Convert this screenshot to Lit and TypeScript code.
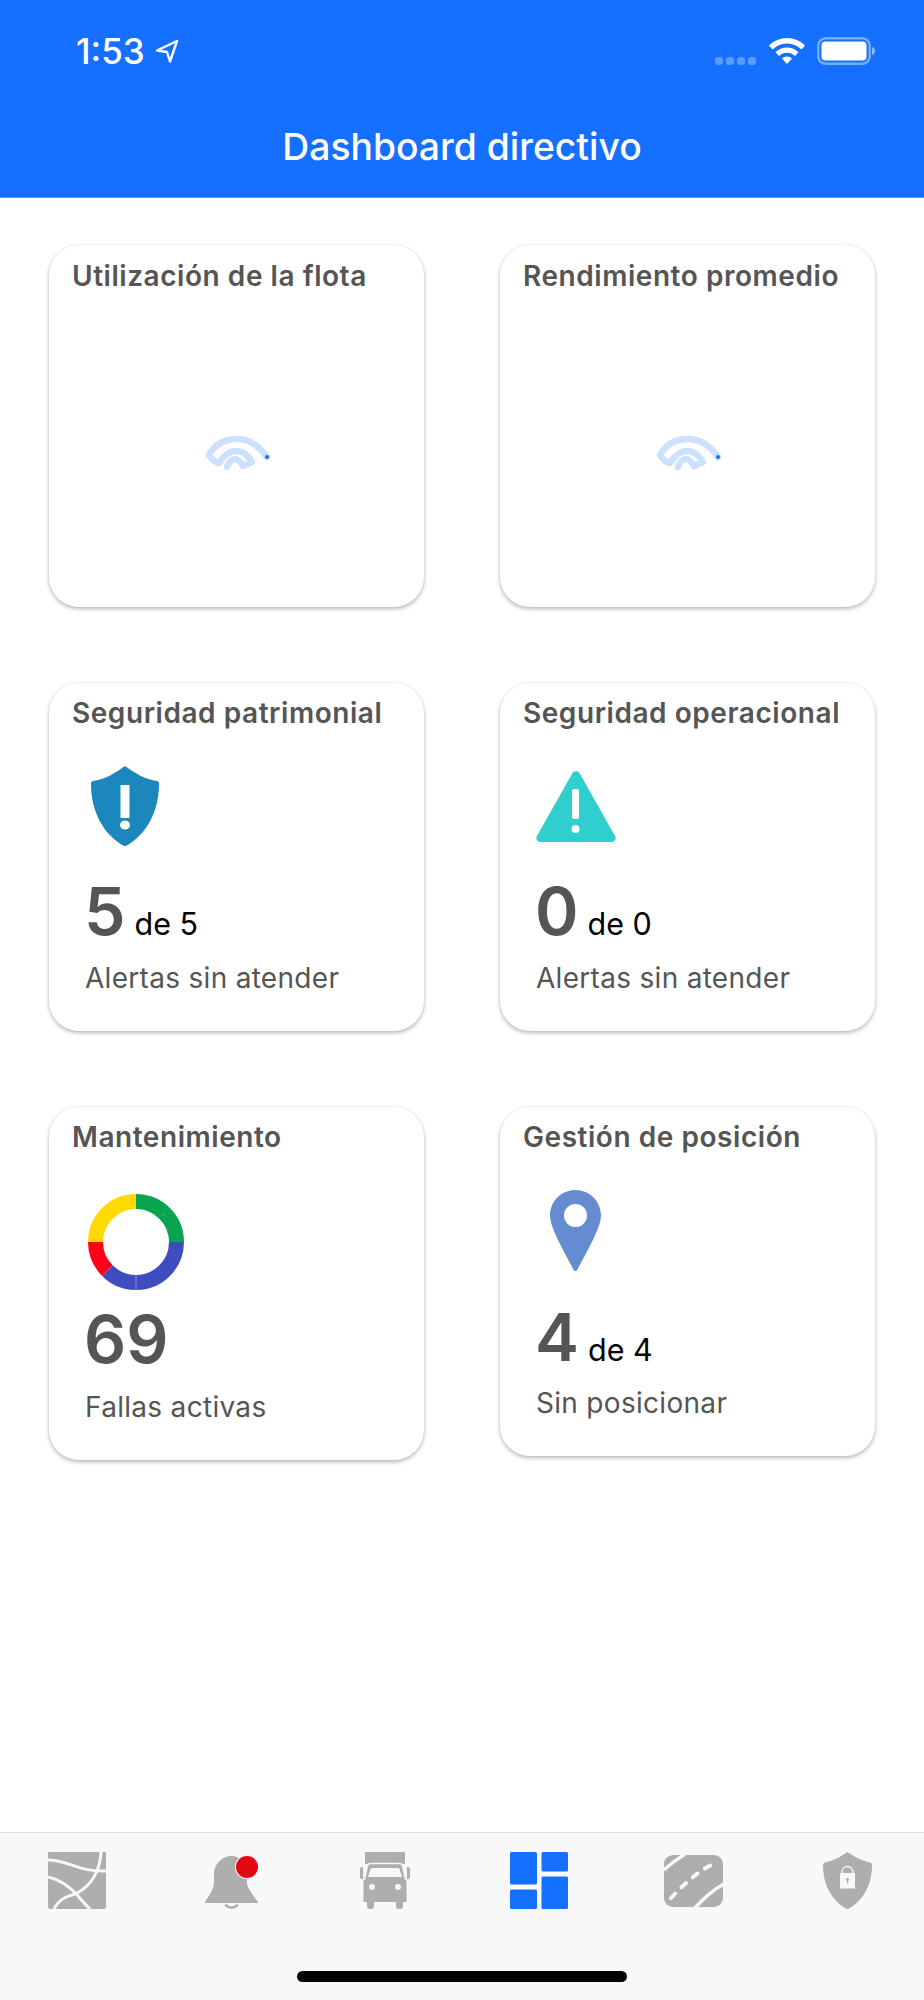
import { LitElement, html, css, svg } from "lit";
import { customElement } from "lit/decorators.js";

const spinner = svg`<svg class="spin" width="68" height="40" viewBox="0 0 68 40" fill="none">
<path d="M63 24C54 11 44 6 33 6C21 6 11 11 5 22C8 27 11 29 15 30C20 22 25 18 32 18C39 18 44 22 48 29L39 33C36 28 34 26 31 26C28 26 25 29 23 34" stroke="#cce0ff" stroke-width="6.500" stroke-linecap="round" stroke-linejoin="round"/>
<circle cx="63" cy="24" r="2" fill="#156fff"/></svg>`;

const shield = svg`<svg class="ic" style="margin-left:42px" width="68" height="80" viewBox="0 0 68 80">
<path d="M34 0C42 6 55 14 66 15C68 15.500 68 17 68 18C68 46 55 69 35 80C34.500 80.300 33.500 80.300 33 80C13 69 0 46 0 18C0 17 0 15.500 2 15C13 14 26 6 34 0Z" fill="#1c87bd"/>
<rect x="29.500" y="19" width="9" height="33" fill="#fff"/><ellipse cx="34" cy="59" rx="5" ry="4.500" fill="#fff"/></svg>`;

const triangle = svg`<svg class="ic" style="margin-left:36px" width="80" height="71" viewBox="0 0 80 71">
<path d="M36.500 2C38 -0.500 42 -0.500 43.500 2L79 65C80.500 68 79 71 76 71H4C1 71 -0.500 68 1 65Z" fill="#2fcfcf"/>
<rect x="36" y="18" width="7" height="30" rx="2" fill="#fff"/><circle cx="39.500" cy="58" r="4" fill="#fff"/></svg>`;

const donut = svg`<svg class="ic" style="margin-left:39px" width="96" height="96" viewBox="0 0 96 96" fill="none" stroke-width="15">
<path d="M48 7.500A40.500 40.500 0 0 1 88.500 48" stroke="#0aa34f"/>
<path d="M88.500 48A40.500 40.500 0 0 1 48 88.500" stroke="#3f4cc0"/>
<path d="M48 88.500A40.500 40.500 0 0 1 19.400 76.600" stroke="#3f4cc0"/>
<path d="M19.400 76.600A40.500 40.500 0 0 1 7.500 48" stroke="#ff0019"/>
<path d="M7.500 48A40.500 40.500 0 0 1 48 7.500" stroke="#ffd900"/>
<path d="M48 81V96" stroke="#aab" stroke-width="0.700"/><path d="M74 22L77 19" stroke="#6cc" stroke-width="0.700"/></svg>`;

const pin = svg`<svg class="ic" style="margin-left:50px" width="51" height="81" viewBox="0 0 51 81">
<path fill-rule="evenodd" d="M25.500 0C39.600 0 51 11.400 51 25.500C51 38 35 65 27.500 79.500C26.500 81.500 24.500 81.500 23.500 79.500C16 65 0 38 0 25.500C0 11.400 11.400 0 25.500 0ZM25.500 14A11.500 11.500 0 1 0 25.500 37A11.500 11.500 0 1 0 25.500 14Z" fill="#658cd0"/></svg>`;

const tabMap = svg`<svg width="58" height="57" viewBox="0 0 58 57">
<path d="M1 0H57A1 1 0 0 1 58 1V55A2 2 0 0 1 56 57H2A2 2 0 0 1 0 55V1A1 1 0 0 1 1 0Z" fill="#aeaeae"/>
<g fill="none" stroke="#f8f8f8" stroke-width="3"><path d="M0 8C20 8 30 20 58 19"/><path d="M53 0C52 20 42 37 24 43C13 46 9 51 6 57"/><path d="M0 25C14 28 23 36 30 44C34 49 38 53 42 57"/></g></svg>`;

const tabBell = svg`<svg width="53" height="53" viewBox="0 0 53 53">
<path d="M26.500 0C36 0 42 8 42 18V27C42 32 49 40 53 46C53.500 47 53 47 52 47H1C0 47 -0.500 47 0 46C4 40 9 32 9 27V18C9 8 17 0 26.500 0Z" fill="#aeaeae"/>
<path d="M20.500 48.500A6.500 5 0 0 0 32.500 48.500" fill="none" stroke="#aeaeae" stroke-width="2.600"/></svg>`;

const tabTruck = svg`<svg width="50" height="57" viewBox="0 0 50 57">
<path d="M5 0H45V12H5Z" fill="#aeaeae"/>
<path d="M9 10H41L46.500 28V50H43V54Q43 57 40 57H39Q36 57 36 54V50H14V54Q14 57 11 57H10Q7 57 7 54V50H3.500V28Z" fill="#aeaeae"/>
<path d="M0 17Q0 15 2 15H3V27H2Q0 27 0 25ZM50 17Q50 15 48 15H47V27H48Q50 27 50 25Z" fill="#aeaeae"/>
<path d="M4.500 28L7.500 14Q8 11.500 10.500 11.500H39.500Q42 11.500 42.500 14L45.500 28" fill="none" stroke="#f8f8f8" stroke-width="1.300"/>
<path d="M12 16H38Q39 16 39.500 17L42 25H8L10.500 17Q11 16 12 16Z" fill="#f8f8f8"/>
<circle cx="12" cy="35" r="3" fill="#f8f8f8"/><circle cx="38" cy="35" r="3" fill="#f8f8f8"/></svg>`;

const tabDash = svg`<svg width="58" height="57" viewBox="0 0 58 57" fill="#156fff">
<rect width="27" height="32.500" rx="1.500"/><rect x="31.500" width="26.500" height="19.500" rx="1.500"/>
<rect y="37.500" width="27" height="19.500" rx="1.500"/><rect x="31.500" y="24.500" width="26.500" height="32.500" rx="1.500"/></svg>`;

const tabRoad = svg`<svg width="59" height="52" viewBox="0 0 59 52">
<rect width="59" height="52" rx="9" fill="#aeaeae"/>
<g fill="none" stroke="#f8f8f8"><path d="M0 15C6 9 14 4 21 -1" stroke-width="3.500"/><path d="M31 53C39 44 49 35 60 29" stroke-width="3.500"/>
<path d="M7 43C22 27 38 13 52 8" stroke-width="4" stroke-linecap="round" stroke-dasharray="6 9"/></g></svg>`;

const tabShield = svg`<svg width="49" height="57" viewBox="0 0 49 57">
<path d="M24.500 0C30 4 39 9 47 10.500C48.500 11 49 12 49 13C49 33 40 49 25 57C24.500 57.200 24 57.200 24 57C9 49 0 33 0 13C0 12 0.500 11 2 10.500C10 9 19 4 24.500 0Z" fill="#aeaeae"/>
<rect x="17" y="21" width="15" height="15.500" fill="#f8f8f8"/><path d="M19 22V20A5.500 5.500 0 0 1 30 20V22" fill="none" stroke="#f8f8f8" stroke-width="1.300"/>
<circle cx="24.500" cy="27.500" r="1.500" fill="#aeaeae"/><rect x="24" y="28" width="1.100" height="3.500" fill="#aeaeae"/></svg>`;

const arrow = svg`<svg class="loc" width="24" height="24" viewBox="0 0 24 24" fill="none">
<path d="M22 2L2 11.500L12 13L15 22.500Z" stroke="#fff" stroke-width="2.400" stroke-linejoin="round"/></svg>`;

const wifi = svg`<svg width="36" height="26" viewBox="0 0 36 26" fill="#fff">
<path d="M18 0C25 0 31 2.800 36 7.500L32.500 11.500C28.500 7.800 23.500 5.500 18 5.500C12.500 5.500 7.500 7.800 3.500 11.500L0 7.500C5 2.800 11 0 18 0Z"/>
<path d="M18 9.500C22.500 9.500 26.500 11.300 29.500 14.300L26 18C23.800 15.900 21 14.700 18 14.700C15 14.700 12.200 15.900 10 18L6.500 14.300C9.500 11.300 13.500 9.500 18 9.500Z"/>
<path d="M18 18.500C20 18.500 21.700 19.200 23 20.500L18 26L13 20.500C14.300 19.200 16 18.500 18 18.500Z"/></svg>`;

const battery = svg`<svg width="58" height="28" viewBox="0 0 58 28">
<rect x="1.250" y="1.250" width="51.500" height="25.500" rx="7.500" fill="none" stroke="#fff" stroke-opacity=".42" stroke-width="2.500"/>
<rect x="4.500" y="4.500" width="45" height="19" rx="4" fill="#fff"/>
<path d="M55 10V18C57 17.500 58 16 58 14C58 12 57 10.500 55 10Z" fill="#fff" fill-opacity=".5"/></svg>`;

@customElement("app-root")
export class AppRoot extends LitElement {
  static styles = css`
    :host {
      display: flex;
      flex-direction: column;
      width: 924px;
      height: 2000px;
      background: #fff;
      font-family: Inter, "Liberation Sans", sans-serif;
      color: #555;
    }
    .head {
      background: #156fff;
      height: 197px;
      flex: none;
      color: #fff;
      display: flex;
      flex-direction: column;
      border-bottom: 1px solid #5c9bff;
    }
    .status {
      display: flex;
      align-items: center;
      height: 28px;
      margin-top: 37px;
      padding: 0 49px 0 76px;
    }
    .time {
      font-size: 35px;
      font-weight: 500;
      line-height: 28px;
    }
    .loc { margin-left: 10px; }
    .right { margin-left: auto; display: flex; align-items: center; gap: 12px; }
    .dots { display: flex; gap: 3px; margin-top: 20px; margin-right: 1px; }
    .dots i { width: 8px; height: 8px; border-radius: 3px; background: rgba(255,255,255,.3); }
    .title {
      font-size: 37.300px;
      font-weight: 500;
      text-align: center;
      line-height: 44px;
      margin-top: 60px;
    }
    .main {
      flex: 1;
      display: grid;
      grid-template-columns: 375px 375px;
      column-gap: 76px;
      row-gap: 76px;
      align-content: start;
      align-items: start;
      padding: 47px 0 0 49px;
    }
    .card {
      background: #fff;
      border-radius: 30px;
      box-shadow: 0 2px 4px rgba(0,0,0,.28), 0 0 2px rgba(0,0,0,.07);
      display: flex;
      flex-direction: column;
    }
    .t {
      font-size: 28px;
      font-weight: 600;
      line-height: 34px;
      letter-spacing: 0.55px;
      padding: 13px 0 0 23px;
      white-space: nowrap;
    }
    .loading .t { padding-top: 14px; }
    .loading { height: 362px; }
    .loader { flex: 1; display: flex; align-items: center; justify-content: center; padding: 6px 0 0 3px; }
    .ic { display: block; }
    .n {
      display: flex;
      align-items: baseline;
      padding-left: 35px;
      height: 62px;
      line-height: 62px;
      white-space: nowrap;
    }
    .big { font-size: 66px; font-weight: 600; }
    .de { font-size: 30.500px; color: #000; margin-left: 9px; }
    .l { font-size: 28px; letter-spacing: 0.3px; padding-left: 36px; line-height: 34px; }
    .tabs {
      flex: none;
      height: 167px;
      background: #f8f8f8;
      border-top: 1px solid #dcdcdc;
      display: flex;
      flex-direction: column;
    }
    .row { display: flex; height: 57px; margin-top: 19px; }
    .tab { width: 154px; display: flex; align-items: center; justify-content: center; position: relative; }
    .badge { position: absolute; left: 82px; top: 4px; width: 22px; height: 22px; border-radius: 50%; background: #e30613; box-shadow: 0 0 0 1px #f8f8f8; }
    .bellwrap { margin-top: 4px; display: block; height: 53px; }
    .home { width: 330px; height: 11px; border-radius: 6px; background: #000; margin: 62px auto 0; }
  `;

  private stat(cfg: { n: string; de?: string; l: string; icon: unknown; gap: number; after: number; lab: number; h: number; title: string }) {
    return html`<section class="card" style="height:${cfg.h}px">
      <div class="t">${cfg.title}</div>
      <div style="margin-top:${cfg.gap}px">${cfg.icon}</div>
      <div class="n" style="margin-top:${cfg.after}px">
        <span class="big">${cfg.n}</span>${cfg.de ? html`<span class="de">${cfg.de}</span>` : ""}
      </div>
      <div class="l" style="margin-top:${cfg.lab}px">${cfg.l}</div>
    </section>`;
  }

  render() {
    return html`
      <header class="head">
        <div class="status">
          <span class="time">1:53</span>${arrow}
          <div class="right">
            <div class="dots"><i></i><i></i><i></i><i></i></div>
            ${wifi}${battery}
          </div>
        </div>
        <div class="title">Dashboard directivo</div>
      </header>
      <main class="main">
        <section class="card loading"><div class="t">Utilización de la flota</div><div class="loader">${spinner}</div></section>
        <section class="card loading"><div class="t">Rendimiento promedio</div><div class="loader">${spinner}</div></section>
        ${this.stat({ title: "Seguridad patrimonial", icon: shield, gap: 36, after: 34, lab: 19, h: 348, n: "5", de: "de 5", l: "Alertas sin atender" })}
        ${this.stat({ title: "Seguridad operacional", icon: triangle, gap: 41, after: 38, lab: 19, h: 348, n: "0", de: "de 0", l: "Alertas sin atender" })}
        ${this.stat({ title: "Mantenimiento", icon: donut, gap: 40, after: 18, lab: 20, h: 353, n: "69", l: "Fallas activas" })}
        ${this.stat({ title: "Gestión de posición", icon: pin, gap: 36, after: 35, lab: 18, h: 349, n: "4", de: "de 4", l: "Sin posicionar" })}
      </main>
      <nav class="tabs">
        <div class="row">
          <div class="tab">${tabMap}</div>
          <div class="tab"><span class="bellwrap">${tabBell}</span><span class="badge"></span></div>
          <div class="tab">${tabTruck}</div>
          <div class="tab">${tabDash}</div>
          <div class="tab">${tabRoad}</div>
          <div class="tab">${tabShield}</div>
        </div>
        <div class="home"></div>
      </nav>
    `;
  }
}
